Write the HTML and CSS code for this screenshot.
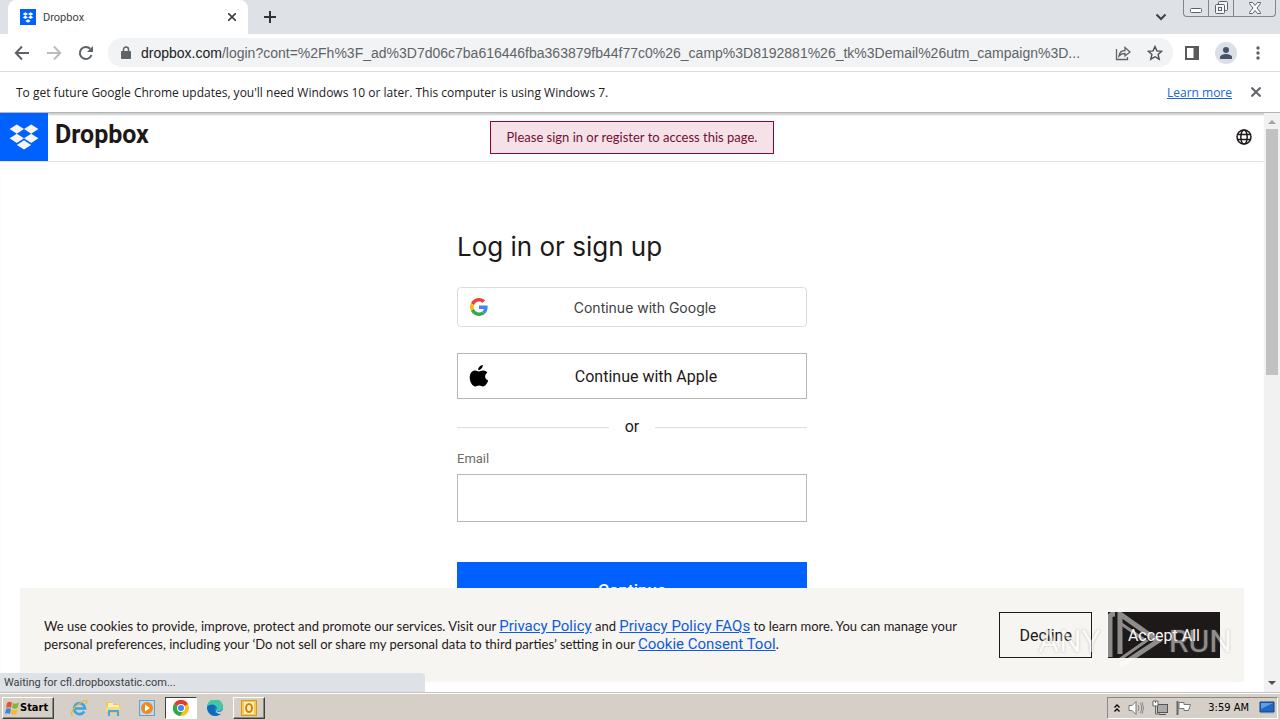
FILE: index.html
```html
<!DOCTYPE html>
<html lang="en">
<head>
  <meta charset="UTF-8">
  <meta name="viewport" content="width=device-width, initial-scale=1.0">
  <title>Dropbox</title>
  <link rel="stylesheet" href="styles.css">
</head>
<body>
  <!-- Browser window -->
  <div class="tab-strip">
    <div class="tab">
      <svg class="tab-icon" width="16" height="16" viewBox="0 0 48 48"><rect width="48" height="48" fill="#0061fe"/><path fill="#fff" d="M16 10l8 5-8 5-8-5zM32 10l8 5-8 5-8-5zM16 20l8 5-8 5-8-5zM32 20l8 5-8 5-8-5zM24 31l8 5-8 5-8-5z"/></svg>
      <span class="tab-title">Dropbox</span>
      <button type="button" class="icon-button" aria-label="Close tab"><svg width="8" height="8" viewBox="0 0 8 8"><path d="M0 0l8 8M8 0L0 8" stroke="#3c4043" stroke-width="1.6"/></svg></button>
    </div>
    <button type="button" class="icon-button new-tab" aria-label="New tab"><svg width="12" height="12" viewBox="0 0 12 12"><path d="M6 0v12M0 6h12" stroke="#303338" stroke-width="2"/></svg></button>
    <button type="button" class="icon-button tab-search" aria-label="Search tabs"><svg width="12" height="8" viewBox="0 0 12 8"><path d="M1.500 1.500L6 6l4.500-4.500" fill="none" stroke="#3c4043" stroke-width="2"/></svg></button>
    <div class="window-buttons">
      <button type="button" aria-label="Minimize"><svg width="14" height="14" viewBox="0 0 14 14"><rect x="1.500" y="7.500" width="11" height="4" rx="1" fill="#fff" stroke="#5b6069"/></svg></button>
      <button type="button" aria-label="Restore"><svg width="14" height="14" viewBox="0 0 14 14"><g fill="#f4f5f7" stroke="#5b6069"><rect x="4.500" y=".5" width="9" height="9" rx="1"/><rect x="1.500" y="3.500" width="9" height="9" rx="1"/><rect x="4.500" y="6.500" width="3" height="3"/></g></svg></button>
      <button type="button" class="window-close" aria-label="Close"><svg width="12" height="12" viewBox="0 0 12 12"><path d="M.5.5h3L6 3.500 8.500.5h3v1L8 6l3.500 4.500v1h-3L6 8.500l-2.500 3h-3v-1L4 6 .5 1.500z" fill="#fff" stroke="#5b6069"/></svg></button>
    </div>
  </div>

  <div class="toolbar">
    <button type="button" class="icon-button" aria-label="Back"><svg width="16" height="16" viewBox="0 0 16 16"><path d="M15 8H2M8 1.500L1.800 8 8 14.500" fill="none" stroke="#5f6368" stroke-width="2"/></svg></button>
    <button type="button" class="icon-button" aria-label="Forward"><svg width="16" height="16" viewBox="0 0 16 16"><path d="M1 8h13M8 1.500L14.200 8 8 14.500" fill="none" stroke="#b9bcbf" stroke-width="2"/></svg></button>
    <button type="button" class="icon-button" aria-label="Reload"><svg width="16" height="16" viewBox="0 0 16 16"><path d="M13.500 10A6 6 0 1 1 12.200 3.800" fill="none" stroke="#5f6368" stroke-width="2"/><path d="M15 1v6H9z" fill="#5f6368"/></svg></button>
    <label class="address-bar">
      <svg width="12" height="14" viewBox="0 0 12 14"><rect x="1" y="5" width="10" height="8" rx="1" fill="#5f6368"/><path d="M3.500 6V3.500a2.500 2.500 0 0 1 5 0V6" fill="none" stroke="#5f6368" stroke-width="1.500"/></svg>
      <span class="address-host">dropbox.com</span>
      <input type="text" class="address-path" aria-label="Address" value="/login?cont=%2Fh%3F_ad%3D7d06c7ba616446fba363879fb44f77c0%26_camp%3D8192881%26_tk%3Demail%26utm_campaign%3D...">
      <button type="button" class="icon-button" aria-label="Share"><svg width="16" height="16" viewBox="0 0 16 16"><path d="M1.500 4v10.500h11V12M4 11c.5-4 3-5.500 6-5.500v-3L15 7l-5 4V8.500C7.500 8.500 5.500 9 4 11z" fill="none" stroke="#5f6368" stroke-width="1.300"/></svg></button>
      <button type="button" class="icon-button bookmark" aria-label="Bookmark"><svg width="16" height="16" viewBox="0 0 16 16"><path d="M8 1.500l1.900 4.400 4.800.4-3.600 3.200 1.100 4.700L8 11.700l-4.200 2.500 1.100-4.700L1.300 6.300l4.800-.4z" fill="none" stroke="#4d5156" stroke-width="1.400"/></svg></button>
    </label>
    <button type="button" class="icon-button" aria-label="Side panel"><svg width="14" height="14" viewBox="0 0 14 14"><rect x="1" y="1" width="12" height="12" fill="none" stroke="#5a5a5c" stroke-width="2"/><path d="M8.500 0H14v14H8.500z" fill="#5a5a5c"/></svg></button>
    <button type="button" class="icon-button" aria-label="Profile"><svg width="22" height="22" viewBox="0 0 22 22"><circle cx="11" cy="11" r="11" fill="#dbdfe6"/><circle cx="11" cy="8" r="3" fill="#47536b"/><path d="M5 17v-2c0-2 4-3 6-3s6 1 6 3v2z" fill="#47536b"/></svg></button>
    <button type="button" class="icon-button" aria-label="Menu"><svg width="10" height="14" viewBox="0 0 10 14"><g fill="#5f6368"><circle cx="5" cy="2" r="1.700"/><circle cx="5" cy="7" r="1.700"/><circle cx="5" cy="12" r="1.700"/></g></svg></button>
  </div>

  <div class="infobar">
    <span>To get future Google Chrome updates, you'll need Windows 10 or later. This computer is using Windows 7.</span>
    <a href="#" class="infobar-link">Learn more</a>
    <button type="button" class="icon-button" aria-label="Dismiss"><svg width="10" height="10" viewBox="0 0 10 10"><path d="M.5.5l9 9M9.500.5l-9 9" stroke="#5f6368" stroke-width="2"/></svg></button>
  </div>

  <!-- Page -->
  <div class="viewport">
    <div class="page">
      <header class="site-header">
        <a href="#" class="brand">
          <svg width="48" height="48" viewBox="0 0 48 48"><rect width="48" height="48" fill="#0061fe"/><path fill="#f7f5f2" d="M16.800 11.500l7.200 4.600-7.200 4.600-7.200-4.600zM31.200 11.500l7.200 4.600-7.200 4.600-7.200-4.600zM16.800 20.700l7.200 4.600-7.200 4.600-7.200-4.600zM31.200 20.700l7.200 4.600-7.200 4.600-7.200-4.600zM24 27.300l7.200 4.600-7.200 4.600-7.200-4.600z"/></svg>
          <span>Dropbox</span>
        </a>
        <p class="alert" role="alert">Please sign in or register to access this page.</p>
        <button type="button" class="icon-button language" aria-label="Language"><svg width="16" height="16" viewBox="0 0 16 16"><g fill="none" stroke="#1e1919" stroke-width="1.500"><circle cx="8" cy="8" r="7"/><ellipse cx="8" cy="8" rx="3.200" ry="7"/><path d="M1.500 5.500h13M1.500 10.500h13"/></g></svg></button>
      </header>

      <form class="login">
        <h1>Log in or sign up</h1>
        <button type="button" class="provider google">
          <svg width="18" height="18" viewBox="0 0 48 48"><path fill="#ea4335" d="M24 9.500c3.540 0 6.710 1.220 9.210 3.600l6.850-6.850C35.900 2.380 30.470 0 24 0 14.620 0 6.510 5.380 2.560 13.220l7.980 6.190C12.430 13.720 17.740 9.500 24 9.500z"/><path fill="#4285f4" d="M46.980 24.550c0-1.570-.15-3.090-.38-4.550H24v9.020h12.940c-.58 2.960-2.260 5.480-4.780 7.180l7.730 6c4.510-4.180 7.090-10.360 7.090-17.650z"/><path fill="#fbbc05" d="M10.530 28.590c-.48-1.450-.76-2.990-.76-4.590s.27-3.140.76-4.590l-7.980-6.190C.92 16.460 0 20.120 0 24c0 3.880.92 7.540 2.560 10.780l7.970-6.190z"/><path fill="#34a853" d="M24 48c6.480 0 11.930-2.130 15.890-5.810l-7.730-6c-2.150 1.450-4.920 2.300-8.160 2.300-6.260 0-11.570-4.220-13.470-9.910l-7.980 6.190C6.510 42.620 14.620 48 24 48z"/></svg>
          <span>Continue with Google</span>
        </button>
        <button type="button" class="provider apple">
          <svg width="20" height="22" viewBox="0 0 20 22"><path d="M13.800 0c.2 2.800-2 5-4.600 5.100C9 2.700 11.300.3 13.800 0zM10 6.500c1 0 2.400-1.100 4.400-1 1.500.1 3 .8 4 2-3.300 2.200-2.900 6.600.8 8-.8 2.400-2.900 5.900-5 5.900-1.500 0-2.200-.9-4-.9s-2.600.9-4 .9C3.400 21.400.7 16.700.7 12.500c0-4.600 2.700-7 5.300-7 1.600 0 3 1 4 1z"/></svg>
          <span>Continue with Apple</span>
        </button>
        <div class="divider"><span>or</span></div>
        <label class="field-label" for="email">Email</label>
        <input type="email" id="email" class="field" name="email">
        <button type="submit" class="submit">Continue</button>
      </form>

      <section class="cookie-banner">
        <p>We use cookies to provide, improve, protect and promote our services. Visit our <a href="#">Privacy Policy</a> and <a href="#">Privacy Policy FAQs</a> to learn more. You can manage your personal preferences, including your ‘Do not sell or share my personal data to third parties’ setting in our <a href="#">Cookie Consent Tool</a>.</p>
        <button type="button" class="decline">Decline</button>
        <button type="button" class="accept">Accept All</button>
      </section>
    </div>

    <div class="scrollbar">
      <svg width="8" height="4" viewBox="0 0 8 4"><path d="M4 0l4 4H0z" fill="#a3a3a3"/></svg>
      <div class="scroll-track"><div class="scroll-thumb"></div></div>
      <svg width="8" height="4" viewBox="0 0 8 4"><path d="M0 0h8L4 4z" fill="#505050"/></svg>
    </div>

    <div class="status">Waiting for cfl.dropboxstatic.com...</div>
    <div class="watermark">
      <span>ANY</span>
      <svg width="60" height="62" viewBox="0 0 60 62"><g fill="none" stroke="#fff" stroke-width="5"><path d="M5 47V7q0-3 5-3"/><path d="M15 44V4l38 27-38 25"/><path d="M15 13l26 18-27 19" stroke-width="3"/></g></svg>
      <span>RUN</span>
    </div>
  </div>

  <!-- Desktop taskbar -->
  <footer class="taskbar">
    <button type="button" class="start"><svg width="16" height="16" viewBox="0 0 16 16"><path d="M3 3q2-2 5-.5L7 8Q4.500 6.500 2 8z" fill="#e8532b"/><path d="M9 3q3 1.500 6-.5L13.500 8Q11 9.500 8 8z" fill="#7cb83c"/><path d="M2 9q2-1.500 5 0l-1 5q-3-1.500-5 0z" fill="#3b86d8"/><path d="M8 9.500q3 1 5.500-.5l-1 5Q10 15.500 7 14z" fill="#f7b928"/></svg>Start</button>
    <div class="launchers">
      <button type="button" class="launcher" aria-label="Internet Explorer"><svg width="18" height="18" viewBox="0 0 18 18"><path d="M14.200 12.500A5.500 5.500 0 1 1 15 9.500H5" fill="none" stroke="#38a5e4" stroke-width="2.600"/><path d="M3 16C-1 17 3 8 10 4s8-3 6 1" fill="none" stroke="#e8b93b" stroke-width="1.300"/></svg></button>
      <button type="button" class="launcher" aria-label="Explorer"><svg width="18" height="18" viewBox="0 0 18 18"><path d="M2 3h5l1 2h8v9H2z" fill="#edc75c"/><path d="M4 4h5v2h6v3H4z" fill="#fff2b8"/><path d="M2 8h14v5H2z" fill="#f4dc86"/><path d="M4 17v-6h11v6h-2v-4H6v4z" fill="#4aa6dd"/></svg></button>
      <button type="button" class="launcher" aria-label="Media Player"><svg width="18" height="18" viewBox="0 0 18 18"><rect x="1.500" y="1.500" width="15" height="15" fill="#b9dcf3" stroke="#6b9fc9"/><circle cx="9" cy="9" r="6" fill="#f08a1d"/><path d="M7 5.500l5 3.500-5 3.500z" fill="#fff"/></svg></button>
      <button type="button" class="launcher pressed" aria-label="Chrome"><svg width="16" height="16" viewBox="0 0 16 16"><circle cx="8" cy="8" r="8" fill="#fbc116"/><path d="M8 8L1 4a8 8 0 0 1 14 0z" fill="#e33b2e"/><path d="M8 8L1 4a8 8 0 0 0 6 12l3-5z" fill="#2da94f"/><circle cx="8" cy="8" r="4" fill="#fff"/><circle cx="8" cy="8" r="3" fill="#4285f4"/></svg></button>
      <button type="button" class="launcher" aria-label="Edge"><svg width="16" height="16" viewBox="0 0 16 16"><circle cx="8" cy="8" r="8" fill="#1683d8"/><path d="M0 7a8 8 0 0 1 16 0c0 3-2 4-5 4-2 0-2-1-1-2 1-3-5-6-10-2z" fill="#42c8a5"/><path d="M0 7c3-4 10-3 8 1s1 6 6 6c-6 4-13 1-14-7z" fill="#1169bb"/><path d="M9 9q0 3 3 3 2 0 4-2v2l-2 2q-6 0-5-5z" fill="#d6cfc7"/></svg></button>
      <button type="button" class="launcher raised" aria-label="Outlook"><svg width="16" height="16" viewBox="0 0 16 16"><rect x=".5" y=".5" width="15" height="15" fill="#f6c84c" stroke="#d99a1c"/><rect x="3" y="2" width="10" height="12" fill="#fff0b8"/><ellipse cx="8" cy="8" rx="3" ry="4" fill="none" stroke="#c78314" stroke-width="2"/></svg></button>
    </div>
    <div class="tray">
      <svg width="6" height="8" viewBox="0 0 6 8"><path d="M.5 3.500L3 1l2.500 2.500M.5 7.500L3 5l2.500 2.500" fill="none" stroke="#000" stroke-width="1.300"/></svg>
      <svg width="16" height="16" viewBox="0 0 16 16"><path d="M1 5.500h3l4-4v13l-4-4H1z" fill="#fff" stroke="#777"/><path d="M10 5q2 3 0 6M12 3q3.500 5 0 10M14 2q3 6 0 12" fill="none" stroke="#888"/></svg>
      <svg width="16" height="16" viewBox="0 0 16 16"><rect x="5.500" y="4.500" width="10" height="8" fill="#aaa" stroke="#555"/><path d="M7 14.500h7" stroke="#555"/><path d="M1 1h5v5H1z" fill="#fff" stroke="#666"/><path d="M3.500 1v2M3.500 6v8H8" fill="none" stroke="#666"/></svg>
      <svg width="16" height="16" viewBox="0 0 16 16"><path d="M1.500 1v14" stroke="#666" stroke-width="2"/><path d="M3 2.500h5v2h6.500l-2 6H8v-2H3z" fill="#fff" stroke="#777"/></svg>
      <time>3:59 AM</time>
      <svg width="16" height="14" viewBox="0 0 16 14"><path d="M1 1h14v10H1z" fill="#2467c0" stroke="#1b3e75"/><path d="M2 2h12L2 8z" fill="#5aa0e8"/><path d="M1 12.500h14" stroke="#a9c6e8"/></svg>
    </div>
  </footer>
</body>
</html>
```

FILE: styles.css
```css
* {
  box-sizing: border-box;
}

body {
  display: flex;
  flex-direction: column;
  height: 100vh;
  margin: 0;
  overflow: hidden;
  background-color: #fff;
  font-family: "Open Sans", sans-serif;
  font-size: 12px;
  color: #202124;
}

button {
  padding: 0;
  border: none;
  background: none;
  font-family: inherit;
  cursor: pointer;
}

svg {
  display: block;
  flex: none;
}

p,
h1 {
  margin: 0;
}

.icon-button {
  display: flex;
  align-items: center;
  justify-content: center;
  flex: none;
}

/* Tabs */
.tab-strip {
  display: flex;
  align-items: center;
  height: 34px;
  flex: none;
  padding: 0 4px 0 8px;
  background-color: #dee1e6;
}

.tab {
  display: flex;
  align-items: center;
  gap: 7px;
  width: 240px;
  height: 34px;
  padding: 0 12px;
  border-radius: 8px 8px 0 0;
  background-color: #fff;
}

.tab-title {
  flex: 1;
  font-family: Roboto, sans-serif;
  font-size: 11px;
  color: #3c4043;
}

.new-tab {
  margin-left: 16px;
}

.tab-search {
  margin: 0 16px 0 auto;
}

.window-buttons {
  display: flex;
  align-self: flex-start;
  height: 17px;
  border: 1px solid #80858e;
  border-top: none;
  border-radius: 0 0 4px 4px;
}

.window-buttons button {
  display: flex;
  align-items: center;
  justify-content: center;
  width: 25px;
  border-right: 1px solid #80858e;
}

.window-buttons .window-close {
  width: 41px;
  border-right: none;
}

/* Toolbar */
.toolbar {
  display: flex;
  align-items: center;
  gap: 16px;
  height: 38px;
  flex: none;
  padding: 0 17px 0 14px;
  border-bottom: 1px solid #dadce0;
}

.address-bar {
  display: flex;
  align-items: center;
  flex: 1;
  height: 29px;
  margin: 0 -4px 0 -2px;
  padding: 0 10px 0 12px;
  border-radius: 14px;
  background-color: #f1f3f4;
  font-family: "Liberation Sans", sans-serif;
  font-size: 14px;
}

.address-host {
  margin-left: 9px;
}

.address-path {
  flex: 1;
  min-width: 0;
  margin-right: 8px;
  padding: 0;
  border: none;
  background: none;
  font: inherit;
  color: #5f6368;
}

.bookmark {
  margin-left: 16px;
}

/* Update notice */
.infobar {
  display: flex;
  align-items: center;
  height: 41px;
  flex: none;
  padding: 0 19px 0 16px;
  border-bottom: 1px solid #b4b5b7;
}

.infobar-link {
  margin: 0 19px 0 auto;
  color: #1a66d2;
}

/* Page area */
.viewport {
  display: flex;
  flex: 1;
  min-height: 0;
  position: relative;
}

.page {
  flex: 1;
  position: relative;
  overflow: hidden;
  box-shadow: inset 0 3px 2px -1px #ccc;
  font-family: Roboto, sans-serif;
  color: #1e1919;
}

.site-header {
  display: grid;
  grid-template-columns: 1fr auto 1fr;
  align-items: center;
  height: 49px;
  border-bottom: 1px solid #e3e3e3;
}

.brand {
  display: flex;
  align-items: center;
  gap: 7px;
  font-size: 25px;
  font-weight: 700;
  line-height: 24px;
  color: #1e1919;
  text-decoration: none;
}

.brand span {
  padding-bottom: 4px;
}

.alert {
  padding: 8px 16px;
  border: 1px solid #9b0032;
  background-color: #f5e2e8;
  font-family: Lato, sans-serif;
  font-size: 13px;
  line-height: 15px;
  color: #730e35;
}

.language {
  justify-self: end;
  margin-right: 12px;
}

/* Login form */
.login {
  display: flex;
  flex-direction: column;
  width: 350px;
  margin: 69px auto 0;
}

.login h1 {
  margin-bottom: 24px;
  font-family: Inter, sans-serif;
  font-size: 26px;
  font-weight: 400;
  line-height: 32px;
}

.provider {
  display: flex;
  align-items: center;
  gap: 8px;
  padding: 0 12px;
  border: 1px solid #dadce0;
  color: #1e1919;
}

.provider span {
  flex: 1;
}

.google {
  height: 40px;
  margin-bottom: 26px;
  border-radius: 4px;
  font-family: Inter, sans-serif;
  font-size: 14px;
  color: #3c4043;
}

.apple {
  height: 46px;
  padding: 0 11px;
  border-color: #bbb5ae;
  font-size: 16px;
}

.divider {
  display: flex;
  align-items: center;
  gap: 16px;
  margin: 16px 0 12px;
  font-size: 16px;
  line-height: 24px;
}

.divider::before,
.divider::after {
  content: "";
  flex: 1;
  height: 1px;
  background-color: #dcdcdc;
}

.field-label {
  margin-bottom: 7px;
  font-size: 13px;
  line-height: 16px;
  color: #736c64;
}

.field {
  height: 48px;
  padding: 0 12px;
  border: 1px solid #bbb9b7;
  font-size: 16px;
}

.submit {
  height: 56px;
  margin-top: 40px;
  background-color: #0061fe;
  font-size: 17px;
  font-weight: 500;
  color: #fff;
}

/* Cookie banner */
.cookie-banner {
  display: flex;
  align-items: center;
  gap: 16px;
  position: absolute;
  right: 20px;
  bottom: 10px;
  left: 20px;
  padding: 24px;
  background-color: #f7f5f2;
}

.cookie-banner p {
  flex: 1;
  margin-right: 20px;
  font-family: Lato, sans-serif;
  font-size: 13px;
  line-height: 18px;
}

.cookie-banner a {
  font-family: Roboto, sans-serif;
  font-size: 15px;
  color: #0f5bdb;
}

.cookie-banner button {
  height: 46px;
  padding: 0 19px;
  border: 1px solid #1e1919;
  font-size: 16px;
  color: #1e1919;
}

.cookie-banner .accept {
  background-color: #1e1919;
  color: #f7f5f2;
}

.scrollbar {
  display: flex;
  flex-direction: column;
  align-items: center;
  gap: 5px;
  width: 16px;
  padding: 7px 0;
  background-color: #f1f1f1;
}

.scroll-track {
  flex: 1;
  align-self: stretch;
  padding: 0 2px;
}

.scroll-thumb {
  height: 45%;
  background-color: #c1c1c1;
}

.status {
  position: absolute;
  bottom: 0;
  left: 0;
  width: 425px;
  padding: 0 4px;
  border-radius: 0 4px 0 0;
  background-color: #dee1e6;
  font-family: Roboto, sans-serif;
  font-size: 11px;
  line-height: 19px;
  color: #3c4043;
}

.watermark {
  display: flex;
  align-items: center;
  gap: 4px;
  position: absolute;
  right: 48px;
  bottom: 20px;
  font-family: Roboto, sans-serif;
  font-size: 32px;
  line-height: 62px;
  color: #fff;
  opacity: 0.5;
  pointer-events: none;
}

.watermark span {
  text-shadow: 0 0 2px #777;
}

/* Taskbar */
.taskbar {
  display: flex;
  align-items: center;
  height: 28px;
  flex: none;
  padding: 2px 2px 0;
  border-top: 1px solid #c5c5bd;
  box-shadow: inset 0 1px #fff;
  background-color: #d6cfc7;
  font-family: "DejaVu Sans Condensed", "DejaVu Sans", sans-serif;
  font-size: 11px;
  color: #000;
}

.start {
  display: flex;
  align-items: center;
  width: 52px;
  height: 22px;
  padding-left: 1px;
  border: 1px solid;
  border-color: #fff #404040 #404040 #fff;
  box-shadow: inset -1px -1px #8c8880;
  font-size: 11px;
  font-weight: 700;
}

.launchers {
  display: flex;
  gap: 2px;
  margin-left: 9px;
}

.launcher {
  display: flex;
  align-items: center;
  justify-content: center;
  width: 32px;
  height: 22px;
  border: 1px solid transparent;
}

.pressed {
  border-color: #404040 #fff #fff #404040;
  background-color: #fff;
}

.raised {
  border-color: #fff #404040 #404040 #fff;
  box-shadow: inset -1px -1px #8c8880;
}

.tray {
  display: flex;
  align-items: center;
  gap: 8px;
  height: 22px;
  margin-left: auto;
  padding: 0 2px 0 6px;
  border: 1px solid;
  border-color: #8c8880 #fff #fff #8c8880;
}

.tray time {
  margin: 0 2px 0 8px;
}
```
